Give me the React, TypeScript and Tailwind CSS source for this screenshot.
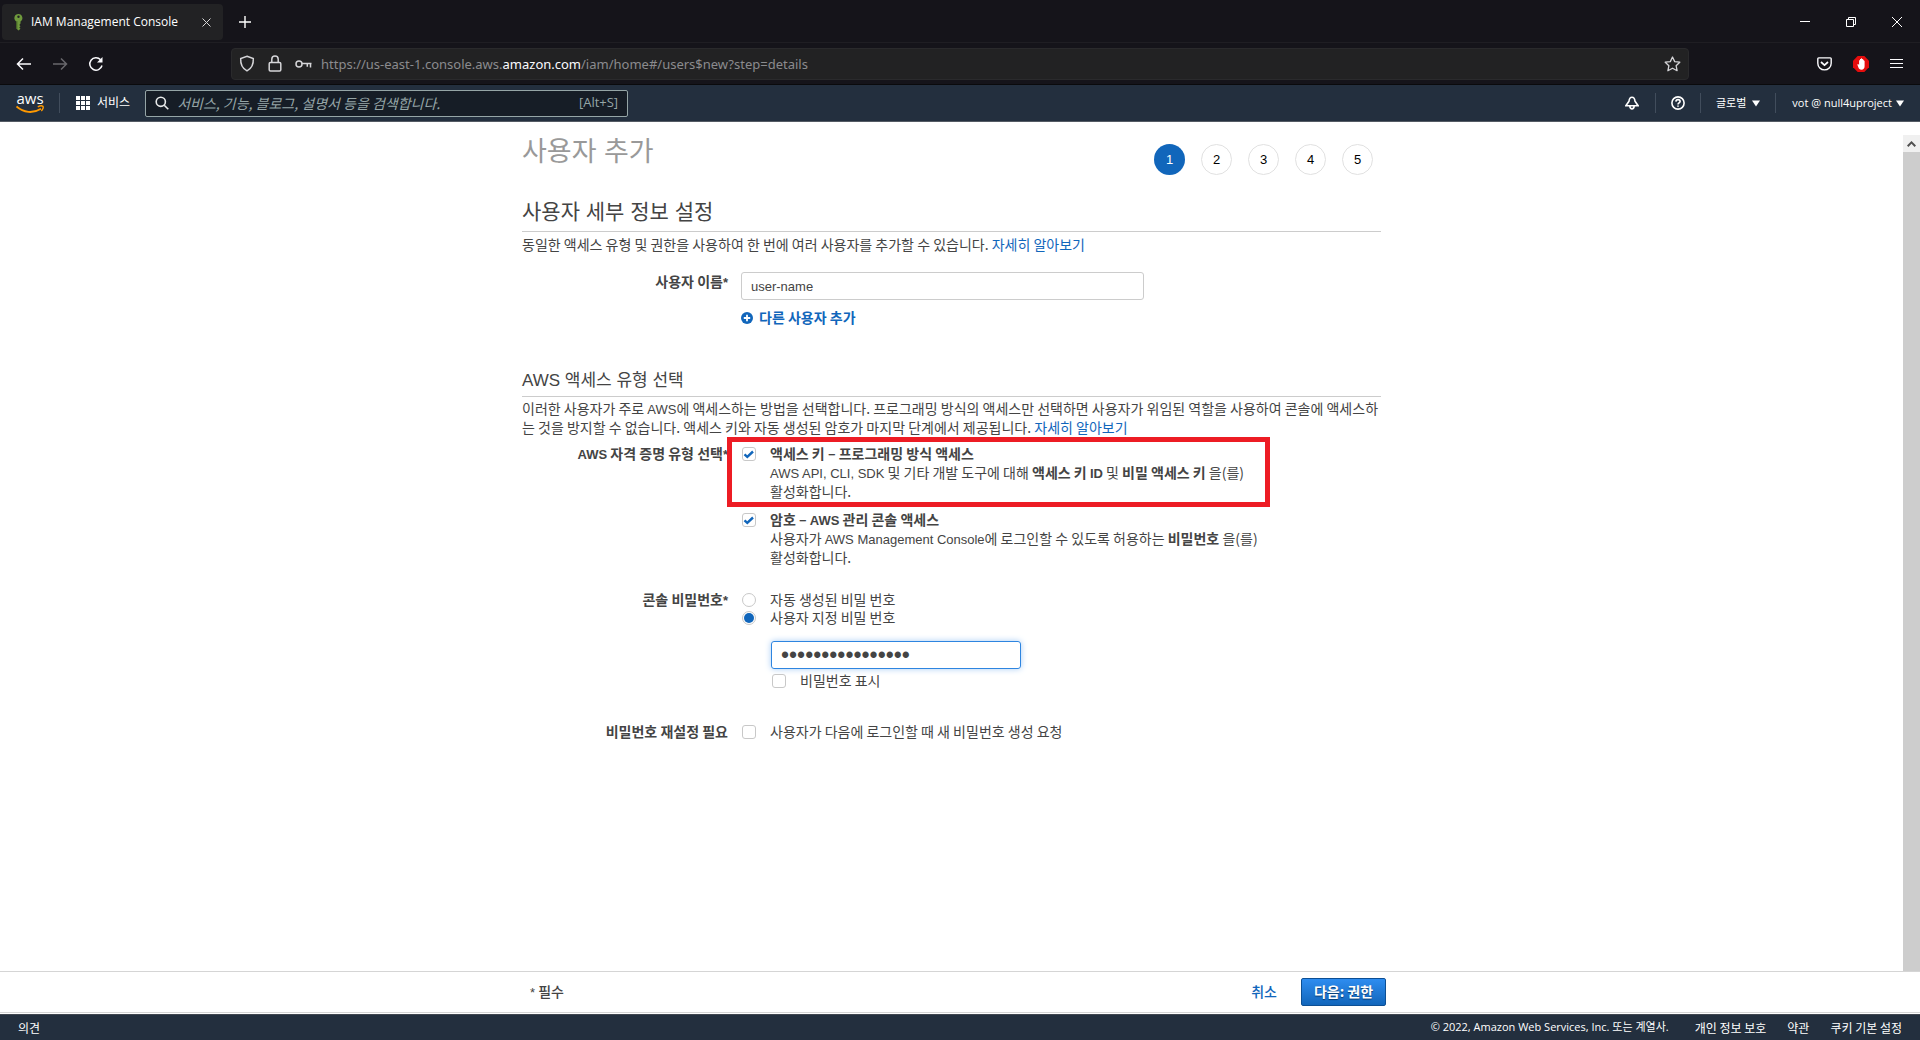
import { useState, type ReactNode } from "react";

const steps = [1, 2, 3, 4, 5];
const footerLinks = ["개인 정보 보호", "약관", "쿠키 기본 설정"];

function En({ children }: { children: ReactNode }) {
  return (
    <span className="font-['Liberation_Sans',sans-serif] text-[13px] leading-none">
      {children}
    </span>
  );
}

function Caret() {
  return (
    <svg width="8" height="7" viewBox="0 0 8 7" fill="currentColor">
      <path d="M0 0.5h8L4 6.5z" />
    </svg>
  );
}

function BrowserTabs() {
  return (
    <div className="flex h-[43px] items-center border-b border-[#1f1e23] pl-0.5 pt-0.5 text-white">
      <div className="flex h-9 w-[221px] items-center rounded bg-[#222224] pl-2.5 pr-3">
        <svg width="14" height="18" viewBox="0 0 14 18">
          <path
            d="M6.500 1a4 4 0 0 0-2.200 7.400V15.500l2.200 2 2-1.800-1.200-1.300 1.200-1.200-1.200-1.300 1.200-1.300V8.400A4 4 0 0 0 6.500 1z"
            fill="#6f9a3d"
          />
          <path d="M4.300 8.500V15.500l1 .9V8z" fill="#3f5f24" />
          <circle cx="6.500" cy="3.800" r="1.200" fill="#222224" />
        </svg>
        <span className="ml-[5px] flex-1 whitespace-nowrap text-xs">
          IAM Management Console
        </span>
        <button type="button" aria-label="탭 닫기">
          <svg width="9" height="9" viewBox="0 0 9 9" stroke="#d8d8d8">
            <path d="M0.500 0.500l8 8M8.500 0.500l-8 8" />
          </svg>
        </button>
      </div>
      <button type="button" aria-label="새 탭" className="ml-4">
        <svg width="12" height="12" viewBox="0 0 12 12" stroke="#fff" strokeWidth="1.400">
          <path d="M6 0v12M0 6h12" />
        </svg>
      </button>
      <div className="ml-auto flex items-center gap-9 pr-[18px]">
        <button type="button" aria-label="최소화">
          <svg width="10" height="10" viewBox="0 0 10 10" stroke="#fff">
            <path d="M0 4.500h10" />
          </svg>
        </button>
        <button type="button" aria-label="이전 크기로">
          <svg width="10" height="10" viewBox="0 0 10 10" stroke="#fff" fill="none">
            <path d="M0.500 2.500h7v7h-7zM2.500 2V0.500h7v7H8" />
          </svg>
        </button>
        <button type="button" aria-label="닫기">
          <svg width="10" height="10" viewBox="0 0 10 10" stroke="#fff">
            <path d="M0 0l10 10M10 0L0 10" />
          </svg>
        </button>
      </div>
    </div>
  );
}

function BrowserToolbar() {
  return (
    <div className="flex h-[42px] items-center border-b border-[#0a0a0c] pl-4 pr-[17px] text-[#fbfbfe]">
      <div className="flex w-[215px] items-center gap-5">
        <button type="button" aria-label="뒤로">
          <svg width="16" height="14" viewBox="0 0 16 14" fill="none" stroke="currentColor" strokeWidth="1.500">
            <path d="M15 7H1.500M7 1.500L1.500 7 7 12.500" />
          </svg>
        </button>
        <button type="button" aria-label="앞으로" className="text-[#68676c]">
          <svg width="16" height="14" viewBox="0 0 16 14" fill="none" stroke="currentColor" strokeWidth="1.500">
            <path d="M1 7h13.500M9 1.500L14.500 7 9 12.500" />
          </svg>
        </button>
        <button type="button" aria-label="새로 고침">
          <svg width="16" height="16" viewBox="0 0 16 16" fill="none" stroke="currentColor" strokeWidth="1.500">
            <path d="M14 9.500A6.200 6.200 0 1 1 12.600 3.800" />
            <path d="M14.500 1v5.500H9z" fill="currentColor" stroke="none" />
          </svg>
        </button>
      </div>
      <div className="flex h-8 flex-1 items-center rounded border border-[#2a2a2c] bg-[#222223] px-[7px] text-[#d5d5d8]">
        <svg width="16" height="17" viewBox="0 0 16 17" fill="none" stroke="currentColor" strokeWidth="1.500">
          <path d="M8 1.200l6.300 2.300c.3 5.500-1.300 9.800-6.300 12.300C3 13.300 1.400 9 1.700 3.500z" />
        </svg>
        <svg width="14" height="17" viewBox="0 0 14 17" fill="none" stroke="currentColor" strokeWidth="1.500" className="ml-[13px]">
          <rect x="1.200" y="7.500" width="11.600" height="8.500" rx="1.200" />
          <path d="M3.800 7.500V4.300a3.200 3.200 0 0 1 6.400 0v3.200" />
        </svg>
        <svg width="17" height="10" viewBox="0 0 17 10" fill="none" stroke="currentColor" strokeWidth="1.500" className="ml-[13px]">
          <circle cx="4" cy="5" r="3" />
          <path d="M7 4.500h9.500M12.300 4.500v3.300M15.500 4.500v4" />
        </svg>
        <span className="ml-[9px] flex-1 pt-0.5 font-['Noto_Sans',sans-serif] text-[13px] text-[#8b8b8e]">
          https://us-east-1.console.aws.<span className="text-[#fbfbfe]">amazon.com</span>
          /iam/home#/users$new?step=details
        </span>
        <button type="button" aria-label="북마크">
          <svg width="17" height="16" viewBox="0 0 17 16" fill="none" stroke="currentColor" strokeWidth="1.300" strokeLinejoin="round">
            <path d="M8.500 1l2.200 4.600 5.100.6-3.700 3.500 1 5-4.600-2.500L3.900 14.700l1-5L1.200 6.200l5.100-.6z" />
          </svg>
        </button>
      </div>
      <div className="ml-32 flex items-center gap-[21px]">
        <button type="button" aria-label="Pocket">
          <svg width="15" height="14" viewBox="0 0 15 14" fill="none" stroke="currentColor" strokeWidth="1.400">
            <path d="M1.700.9h11.600q.9 0 .9.900v4.400a6.700 6.700 0 0 1-13.400 0V1.800q0-.9.900-.9z" />
            <path d="M4 5l3.500 3.200L11 5" strokeWidth="1.700" />
          </svg>
        </button>
        <button type="button" aria-label="광고 차단">
          <svg width="16" height="16" viewBox="0 0 16 16">
            <path d="M4.700 0h6.600L16 4.700v6.600L11.300 16H4.700L0 11.300V4.700z" fill="#e40d0d" />
            <path
              d="M4.300 8.500l.9-.4.900 1V4.200h.9V3h1V2.300h.9V3h1v.8h.9v1h.8v5.400c0 2-1.300 3.500-3.100 3.500S5.800 12.600 5.300 11.200z"
              fill="#fff"
            />
          </svg>
        </button>
        <button type="button" aria-label="메뉴">
          <svg width="13" height="11" viewBox="0 0 13 11" stroke="currentColor">
            <path d="M0 1.500h13M0 5.500h13M0 9.500h13" />
          </svg>
        </button>
      </div>
    </div>
  );
}

function AwsHeader() {
  return (
    <header className="flex h-[37px] items-center border-b border-[#545b64] bg-[#232f3e] pl-4 pr-4 text-xs text-white">
      <a href="#home" aria-label="AWS" className="flex w-7 flex-col items-center">
        <span className="h-3 font-['Open_Sans',sans-serif] text-[15px] font-medium leading-[10px]">
          aws
        </span>
        <svg width="28" height="9" viewBox="0 0 28 9" fill="none" stroke="#f90">
          <path d="M0.500 1.500C7.500 7.800 17 8.800 25 3.700" strokeWidth="1.900" />
          <path d="M21.800 1.800c2-1 4.500-1 5.200-.4.600.8-.2 3.300-1.700 4.700" strokeWidth="1.400" />
        </svg>
      </a>
      <div className="ml-[15px] h-5 w-px bg-[#414d5c]" />
      <button type="button" className="ml-4 flex items-center gap-[7px]">
        <svg width="14" height="14" viewBox="0 0 14 14" fill="#fff">
          <path d="M0 0h4v4H0zM5 0h4v4H5zM10 0h4v4h-4zM0 5h4v4H0zM5 5h4v4H5zM10 5h4v4h-4zM0 10h4v4H0zM5 10h4v4H5zM10 10h4v4h-4z" />
        </svg>
        서비스
      </button>
      <label className="ml-[15px] flex h-[27px] w-[483px] items-center rounded-xs border border-[#95a5a6] bg-[#161d26] px-[9px] text-[#95a5a6]">
        <svg width="14" height="14" viewBox="0 0 14 14" fill="none" stroke="#e8eaea" strokeWidth="1.600">
          <circle cx="5.800" cy="5.800" r="4.600" />
          <path d="M9.200 9.200L13.300 13.300" />
        </svg>
        <input
          type="search"
          aria-label="검색"
          placeholder="서비스, 기능, 블로그, 설명서 등을 검색합니다."
          className="ml-2 flex-1 font-['Noto_Sans_CJK_KR',sans-serif] text-sm italic outline-none placeholder:text-[#95a5a6]"
        />
        <span className="text-[13px]">[Alt+S]</span>
      </label>
      <div className="ml-auto flex items-center text-[11px]">
        <button type="button" aria-label="알림" className="px-4">
          <svg width="14" height="14" viewBox="0 0 14 14" fill="none" stroke="#fff" strokeWidth="1.600">
            <path d="M7 1.200c-2.300 0-2.800 1.800-3 4L0.900 9.700h12.200L10 5.200C9.800 3 9.300 1.200 7 1.200zM4.800 10.200c.2 1.900 1 2.700 2.200 2.700s2-.8 2.200-2.700" />
          </svg>
        </button>
        <div className="h-5 w-px bg-[#414d5c]" />
        <button type="button" aria-label="도움말" className="px-[15px]">
          <svg width="14" height="14" viewBox="0 0 14 14" fill="none" stroke="#fff" strokeWidth="1.600">
            <circle cx="7" cy="7" r="6.100" />
            <path d="M4.900 5.600C5 4.200 5.900 3.600 7 3.600s2.100.7 2.100 1.900C9.100 6.900 7 7 7 8.500M7 9.400v1.400" />
          </svg>
        </button>
        <div className="h-5 w-px bg-[#414d5c]" />
        <button type="button" className="flex items-center gap-1.5 px-[15px]">
          글로벌 <Caret />
        </button>
        <div className="h-5 w-px bg-[#414d5c]" />
        <button type="button" className="flex items-center gap-1 pl-4">
          vot @ null4uproject <Caret />
        </button>
      </div>
    </header>
  );
}

function Checkbox({ id, checked = false }: { id: string; checked?: boolean }) {
  return (
    <span className="relative mt-[3px] block size-3.5">
      <input
        id={id}
        type="checkbox"
        defaultChecked={checked}
        className="peer block size-3.5 appearance-none rounded-[3px] border border-[#c8c8c8] bg-white"
      />
      <svg
        viewBox="0 0 14 14"
        fill="none"
        stroke="#1166bb"
        strokeWidth="2.400"
        className="pointer-events-none absolute inset-0 hidden size-3.5 peer-checked:block"
      >
        <path d="M2.500 7.300l2.800 2.500 5.700-5.300" />
      </svg>
    </span>
  );
}

function Radio({ id, checked = false }: { id: string; checked?: boolean }) {
  return (
    <span className="relative mt-[3px] block size-3.5">
      <input
        id={id}
        type="radio"
        name="password-type"
        defaultChecked={checked}
        className="peer block size-3.5 appearance-none rounded-full border border-[#c8c8c8] bg-white"
      />
      <span className="pointer-events-none absolute inset-[2px] hidden rounded-full bg-[#1166bb] peer-checked:block" />
    </span>
  );
}

function Field({ label, htmlFor, children }: { label: ReactNode; htmlFor: string; children: ReactNode }) {
  return (
    <div className="flex gap-[13px]">
      <label htmlFor={htmlFor} className="w-[206px] shrink-0 text-right font-bold">
        {label}
      </label>
      <div className="flex-1">{children}</div>
    </div>
  );
}

function Option({ control, id, children }: { control: ReactNode; id: string; children: ReactNode }) {
  return (
    <div className="flex gap-3.5 pl-px">
      {control}
      <label htmlFor={id}>{children}</label>
    </div>
  );
}

function UserForm() {
  const [userName, setUserName] = useState("user-name");
  const [password, setPassword] = useState("consolepassword1");

  return (
    <div className="mx-auto w-full max-w-[859px] pb-10">
      <div className="flex items-start justify-between">
        <h1 className="pt-3 font-['Liberation_Sans','Noto_Sans_CJK_KR',sans-serif] text-[27px] leading-9 text-[#999]">
          사용자 추가
        </h1>
        <ol className="flex gap-4 pr-2 pt-[22px]">
          {steps.map((step) => (
            <li
              key={step}
              className={`flex size-[31px] items-center justify-center rounded-full font-['Liberation_Sans',sans-serif] text-[13px] ${
                step === 1 ? "bg-[#1166bb] text-white" : "border border-[#e1e1e1] text-black"
              }`}
            >
              {step}
            </li>
          ))}
        </ol>
      </div>

      <h2 className="mt-[23px] border-b border-[#ccc] pb-[5px] font-['Liberation_Sans','Noto_Sans_CJK_KR',sans-serif] text-[21px] leading-7">
        사용자 세부 정보 설정
      </h2>
      <p className="mt-[3px]">
        동일한 액세스 유형 및 권한을 사용하여 한 번에 여러 사용자를 추가할 수 있습니다.{" "}
        <a href="#learn-users" className="text-[#1166bb]">자세히 알아보기</a>
      </p>

      <div className="mt-[18px]">
        <Field label={<>사용자 이름<En>*</En></>} htmlFor="user-name">
          <input
            id="user-name"
            type="text"
            value={userName}
            onChange={(e) => setUserName(e.target.value)}
            className="block h-7 w-[403px] rounded-[3px] border border-[#ccc] px-[9px] font-['Liberation_Sans',sans-serif] text-[13px] outline-none"
          />
          <button type="button" className="mt-2 flex items-center gap-1.5 font-bold text-[#1166bb]">
            <svg width="12" height="12" viewBox="0 0 12 12">
              <circle cx="6" cy="6" r="6" fill="#1166bb" />
              <path d="M6 2.800v6.400M2.800 6h6.400" stroke="#fff" strokeWidth="1.800" />
            </svg>
            다른 사용자 추가
          </button>
        </Field>
      </div>

      <h3 className="mt-[42px] border-b border-[#ccc] pb-[3px] font-['Liberation_Sans','Noto_Sans_CJK_KR',sans-serif] text-[17px] leading-6">
        AWS 액세스 유형 선택
      </h3>
      <p className="mt-0.5">
        이러한 사용자가 주로 <En>AWS</En>에 액세스하는 방법을 선택합니다. 프로그래밍 방식의
        액세스만 선택하면 사용자가 위임된 역할을 사용하여 콘솔에 액세스하
        <br />
        는 것을 방지할 수 없습니다. 액세스 키와 자동 생성된 암호가 마지막 단계에서 제공됩니다.{" "}
        <a href="#learn-access" className="text-[#1166bb]">자세히 알아보기</a>
      </p>

      <div className="mt-[7px]">
        <Field label={<><En>AWS</En> 자격 증명 유형 선택<En>*</En></>} htmlFor="access-key">
          <div className="relative">
            <Option id="access-key" control={<Checkbox id="access-key" checked />}>
              <b>액세스 키 – 프로그래밍 방식 액세스</b>
              <br />
              <En>AWS API, CLI, SDK</En> 및 기타 개발 도구에 대해{" "}
              <b>액세스 키 <En>ID</En></b> 및 <b>비밀 액세스 키</b> 을(를)
              <br />
              활성화합니다.
            </Option>
            <div className="pointer-events-none absolute -left-3.5 -top-[7px] h-[70px] w-[543px] border-[5px] border-[#ed1c24]" />
          </div>
          <div className="mt-[9px]">
            <Option id="console-access" control={<Checkbox id="console-access" checked />}>
              <b>암호 – <En>AWS</En> 관리 콘솔 액세스</b>
              <br />
              사용자가 <En>AWS Management Console</En>에 로그인할 수 있도록 허용하는{" "}
              <b>비밀번호</b> 을(를)
              <br />
              활성화합니다.
            </Option>
          </div>
        </Field>
      </div>

      <div className="mt-[23px] leading-[18px]">
        <Field label={<>콘솔 비밀번호<En>*</En></>} htmlFor="custom-password">
          <Option id="auto-password" control={<Radio id="auto-password" />}>
            자동 생성된 비밀 번호
          </Option>
          <Option id="custom-password" control={<Radio id="custom-password" checked />}>
            사용자 지정 비밀 번호
          </Option>
          <div className="mt-[15px] pl-[30px]">
            <input
              type="password"
              aria-label="사용자 지정 비밀 번호"
              value={password}
              onChange={(e) => setPassword(e.target.value)}
              className="mb-0.5 block h-7 w-[250px] rounded-[3px] border border-[#2e85e0] px-[9px] font-['Liberation_Sans',sans-serif] text-[23px] shadow-[0_0_6px_#a9cdf5] outline-none"
            />
            <Option id="show-password" control={<Checkbox id="show-password" />}>
              비밀번호 표시
            </Option>
          </div>
        </Field>
      </div>

      <div className="mt-[33px]">
        <Field label="비밀번호 재설정 필요" htmlFor="reset-password">
          <Option id="reset-password" control={<Checkbox id="reset-password" />}>
            사용자가 다음에 로그인할 때 새 비밀번호 생성 요청
          </Option>
        </Field>
      </div>
    </div>
  );
}

export default function App() {
  return (
    <div className="flex min-h-screen flex-col bg-white font-['Open_Sans','Noto_Sans_CJK_KR',sans-serif]">
      <div className="bg-[#15141a]">
        <BrowserTabs />
        <BrowserToolbar />
      </div>
      <AwsHeader />

      <div className="flex flex-1 font-['Noto_Sans_CJK_KR',sans-serif] text-sm leading-[19px] text-[#444]">
        <main className="flex-1">
          <UserForm />
        </main>
        <div className="mt-[13px] flex w-[17px] flex-col bg-[#cdcdcd]">
          <button type="button" aria-label="위로 스크롤" className="flex h-[17px] items-center justify-center bg-[#f0f0f0]">
            <svg width="9" height="6" viewBox="0 0 9 6" fill="none" stroke="#505050" strokeWidth="2">
              <path d="M0.700 5.200l3.800-3.800 3.800 3.800" />
            </svg>
          </button>
        </div>
      </div>

      <div className="mb-px flex h-[42px] items-center border-y border-[#d5d5d5] pr-[17px] font-['Noto_Sans_CJK_KR',sans-serif] text-sm text-[#444]">
        <div className="mx-auto flex w-full max-w-[859px] items-center pl-2">
          <span className="pb-0.5 font-medium"><En>*</En> 필수</span>
          <button type="button" className="ml-auto pb-0.5 font-medium text-[#1166bb]">취소</button>
          <button
            type="button"
            className="-mr-[5px] ml-6 h-7 w-[85px] rounded-xs border border-[#0d4f94] bg-linear-to-b from-[#2e8df0] to-[#1166bb] pb-0.5 font-bold text-white [text-shadow:0_1px_1px_#073a70]"
          >
            다음: 권한
          </button>
        </div>
      </div>

      <footer className="flex h-[26px] items-center border-t border-[#414750] bg-[#232f3e] px-[18px] font-['Noto_Sans_CJK_KR',sans-serif] text-xs text-white">
        <a href="#feedback">의견</a>
        <span className="ml-auto font-['Open_Sans','Noto_Sans_CJK_KR',sans-serif] text-[11px]">
          © 2022, Amazon Web Services, Inc. 또는 계열사.
        </span>
        <nav className="ml-[26px] flex gap-[21px]">
          {footerLinks.map((link) => (
            <a key={link} href="#legal">{link}</a>
          ))}
        </nav>
      </footer>
    </div>
  );
}
